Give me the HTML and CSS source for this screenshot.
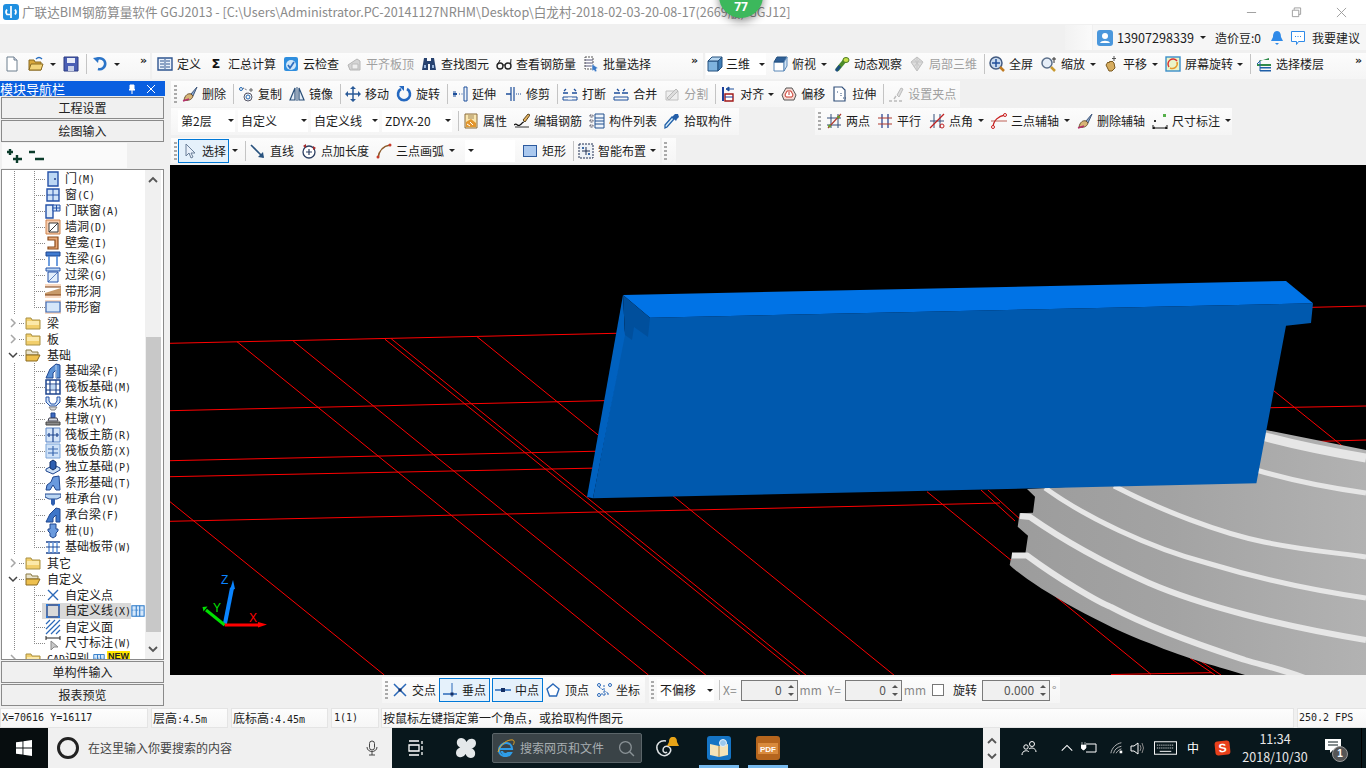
FILE: index.html
```html
<!DOCTYPE html>
<html lang="zh-CN">
<head>
<meta charset="utf-8">
<title>广联达BIM钢筋算量软件 GGJ2013</title>
<link rel="stylesheet" href="styles.css">
</head>
<body>
<svg class="defs" width="0" height="0">
<defs>
<symbol id="new" viewBox="0 0 16 16"><path d="M3 1h7l3 3v11H3z" fill="#fff" stroke="#6d7f8e"/><path d="M10 1v3h3" fill="#dde" stroke="#6d7f8e"/></symbol>
<symbol id="open" viewBox="0 0 16 16"><path d="M1 4h5l1 2h6v8H1z" fill="#d9a83c" stroke="#8a6a20"/><path d="M3 8h12l-2 6H1z" fill="#f3d47a" stroke="#8a6a20"/><path d="M8 3q3-3 6 0" fill="none" stroke="#2a6fc0" stroke-width="1.4"/></symbol>
<symbol id="save" viewBox="0 0 16 16"><path d="M1 1h14v14H1z" fill="#4a5fb5" stroke="#2a3a80"/><path d="M4 2h8v5H4z" fill="#e8ecf8"/><path d="M5 10h6v5H5z" fill="#c8d0e8"/></symbol>
<symbol id="undo" viewBox="0 0 16 16"><path d="M5 3a5.500 5.500 0 1 1 1 10" fill="none" stroke="#2b74c8" stroke-width="2.600"/><path d="M1 2l6-1-1 6z" fill="#2b74c8"/></symbol>
<symbol id="def" viewBox="0 0 16 16"><path d="M1 2h14v12H1z" fill="#eaf1fb" stroke="#2f5590" stroke-width="1.4"/><path d="M3 5h4M3 8h4M3 11h4M9 5h4M9 8h4M9 11h4M8 3v10" stroke="#2f5590"/></symbol>
<symbol id="cloud" viewBox="0 0 16 16"><rect x="1" y="1" width="14" height="14" rx="2" fill="#2f8ede"/><circle cx="8" cy="9" r="5" fill="#cfe7fa"/><path d="M5 9l2 3 4-6" fill="none" stroke="#2f6fc0" stroke-width="1.800"/></symbol>
<symbol id="flat" viewBox="0 0 16 16"><path d="M2 9l9-6 3 2v9H4z" fill="#d5d5d5" stroke="#b5b5b5"/><path d="M6 8h6v5H6z" fill="#eee" stroke="#bbb"/></symbol>
<symbol id="bino" viewBox="0 0 16 16"><path d="M3 2h3v3h4V2h3l2 12h-6V8H7v6H1z" fill="#27426f"/><path d="M3 9h2v3H3zM11 9h2v3h-2z" fill="#9ab6dc"/></symbol>
<symbol id="glasses" viewBox="0 0 16 16"><circle cx="4" cy="10" r="3" fill="none" stroke="#222" stroke-width="1.4"/><circle cx="12" cy="10" r="3" fill="none" stroke="#222" stroke-width="1.4"/><path d="M7 9h2M1.500 9L4 4M14.500 9L15 3" stroke="#222"/></symbol>
<symbol id="batch" viewBox="0 0 16 16"><path d="M2 1h8v12H2z" fill="#fff" stroke="#555" stroke-dasharray="2 1"/><path d="M2 4h8M2 7h8M2 10h8" stroke="#557"/><path d="M9 8l6 4-2 1 1 2-2 1-1-2-2 1z" fill="#3b79c6" stroke="#fff" stroke-width=".5"/></symbol>
<symbol id="cube" viewBox="0 0 16 16"><path d="M1 5h10v10H1z" fill="#7fb3de" stroke="#24507e"/><path d="M1 5l4-4h10l-4 4z" fill="#b7d6ef" stroke="#24507e"/><path d="M11 5l4-4v10l-4 4z" fill="#3f7cb4" stroke="#24507e"/></symbol>
<symbol id="top" viewBox="0 0 16 16"><path d="M2 6h10v9H2z" fill="#fff" stroke="#5a88b8"/><path d="M2 6l3-5h10l-3 5z" fill="#2e5f96" stroke="#24507e"/><path d="M12 6l3-5v9l-3 5z" fill="#d3e4f4" stroke="#5a88b8"/></symbol>
<symbol id="orbit" viewBox="0 0 16 16"><path d="M3 14L12 3" stroke="#4c8c2a" stroke-width="4"/><path d="M2 15L6 10" stroke="#1b4d7e" stroke-width="3"/><ellipse cx="12" cy="4" rx="3" ry="2.500" fill="#c6e04a" stroke="#4c7c20"/></symbol>
<symbol id="local" viewBox="0 0 16 16"><path d="M8 1l6 5-6 9-6-9z" fill="#ddd" stroke="#bdbdbd"/><path d="M2 6h12M8 1v14M5 3l6 8M11 3l-6 8" stroke="#c5c5c5"/></symbol>
<symbol id="fit" viewBox="0 0 16 16"><circle cx="7" cy="7" r="6" fill="#c9daee" stroke="#425a80" stroke-width="1.500"/><path d="M7 3v8M3 7h8" stroke="#23509c" stroke-width="1.500"/><path d="M11 11l4 4" stroke="#c07a20" stroke-width="2.500"/></symbol>
<symbol id="zoom" viewBox="0 0 16 16"><circle cx="6" cy="7" r="5" fill="#e6eef8" stroke="#5b6f8a" stroke-width="1.500"/><path d="M10 11l4 4" stroke="#c99a30" stroke-width="2.500"/><path d="M13 1v6M11 3h4" stroke="#333"/></symbol>
<symbol id="pan" viewBox="0 0 16 16"><path d="M3 9l2-3 1 1 1-2 1 1 1-1 2 2 1 5-3 3H6z" fill="#d6ac5e" stroke="#7b5a20"/><path d="M11 0v5M9 2.500h4" stroke="#555"/></symbol>
<symbol id="rot" viewBox="0 0 16 16"><rect x="1" y="1" width="14" height="14" fill="#eaf4c8" stroke="#3a8ec9" stroke-width="1.400"/><path d="M4 11a5 5 0 0 1 8-6" fill="none" stroke="#d33" stroke-width="1.500"/><path d="M12 6a5 5 0 0 1-7 6" fill="none" stroke="#e69a2a" stroke-width="1.500"/></symbol>
<symbol id="floor" viewBox="0 0 16 16"><path d="M4 5l9-3v2H3zM1 8h14v2H1z" fill="#2f8a4a"/><path d="M4 11h11v1.500H4zM4 14h11v1.500H4z" fill="#1f5fa8"/><path d="M1 8l3-3v10" fill="none" stroke="#1f5fa8"/></symbol>
<symbol id="brush" viewBox="0 0 16 16"><path d="M9 8l6-7-4 9z" fill="#8aa4c8" stroke="#40587c"/><path d="M2 14c1-5 4-7 7-6l2 2c-1 4-5 5-9 4z" fill="#d8b476" stroke="#6a5230"/><path d="M1 15l6-2" stroke="#b52f6a" stroke-width="1.500"/></symbol>
<symbol id="copy" viewBox="0 0 16 16"><circle cx="3" cy="3" r="1.500" fill="#fff" stroke="#2468b0"/><path d="M5 2l4 2M9 7l-2 1" stroke="#445" stroke-dasharray="1 1"/><circle cx="10" cy="11" r="4" fill="none" stroke="#556"/><circle cx="10" cy="11" r="2" fill="none" stroke="#2468b0"/><circle cx="13" cy="4" r="1.200" fill="#ccc" stroke="#666"/></symbol>
<symbol id="mirror" viewBox="0 0 16 16"><path d="M6 2L1 14h5z" fill="#e5edf6" stroke="#2b4f78" stroke-width="1.200"/><path d="M10 2l5 12h-5z" fill="#e5edf6" stroke="#2b4f78" stroke-width="1.200"/><path d="M8 1v14" stroke="#2b4f78"/></symbol>
<symbol id="move" viewBox="0 0 16 16"><path d="M8 1v14M1 8h14" stroke="#2a5a98" stroke-width="1.500"/><path d="M8 0l3 3H5zM8 16l3-3H5zM0 8l3-3v6zM16 8l-3-3v6z" fill="#2a5a98"/></symbol>
<symbol id="rotate" viewBox="0 0 16 16"><path d="M5 3a6 6 0 1 0 6 0" fill="none" stroke="#2468c0" stroke-width="2.600"/><path d="M3 0h5v5z" fill="#2468c0"/></symbol>
<symbol id="extend" viewBox="0 0 16 16"><path d="M12 1h3v14h-3z" fill="#eef4fb" stroke="#1d4e9a"/><path d="M1 8h4" stroke="#1d4e9a" stroke-width="2"/><path d="M7 8h4" stroke="#1d4e9a" stroke-dasharray="1 1.500"/><path d="M1 6h3M1 10h3" stroke="#1d4e9a"/></symbol>
<symbol id="trim" viewBox="0 0 16 16"><path d="M5 1v14M8 1v14" stroke="#1d4e9a" stroke-width="1.200"/><path d="M0 8h5" stroke="#1d4e9a" stroke-width="1.500"/><path d="M10 8h5" stroke="#1d4e9a" stroke-dasharray="1 1"/></symbol>
<symbol id="brk" viewBox="0 0 16 16"><path d="M1 11h14v3H1z" fill="none" stroke="#1d4e9a"/><path d="M2 5l2-2M14 5l-2-2M1 7h5M10 7h5" stroke="#1d4e9a" stroke-width="1.300"/><path d="M7 11v3M9 11v3" stroke="#fff"/></symbol>
<symbol id="mrg" viewBox="0 0 16 16"><path d="M1 11h14v3H1z" fill="none" stroke="#1d4e9a"/><path d="M4 3l2 2M12 3l-2 2M1 7h6M9 7h6" stroke="#1d4e9a" stroke-width="1.300"/></symbol>
<symbol id="splt" viewBox="0 0 16 16"><path d="M2 14h12V5H2z" fill="#eee" stroke="#c0c0c0"/><path d="M3 12l9-9 2 2-9 9z" fill="#ddd" stroke="#bbb"/></symbol>
<symbol id="align" viewBox="0 0 16 16"><path d="M3 1v14" stroke="#1d3f9a" stroke-width="2"/><path d="M5 8h8v7H5z" fill="#fff" stroke="#a01818" stroke-width="1.400"/><path d="M5 11h8" stroke="#1d3f9a"/><path d="M6 3l3-2v4zM9 3h5" stroke="#1d4e9a" fill="#1d4e9a"/></symbol>
<symbol id="offs" viewBox="0 0 16 16"><path d="M5 2h6l4 7-2 5H3l-2-5z" fill="#f6d8d2" stroke="#555"/><path d="M6 5h4l2 4-1 2H5L4 9z" fill="#fff" stroke="#c8382c"/><path d="M8 6v3" stroke="#c8382c"/></symbol>
<symbol id="strc" viewBox="0 0 16 16"><path d="M2 1h8l3 3v11H2z" fill="#fff" stroke="#32507a" stroke-width="1.200"/><path d="M9 7v3M11 12h3M5 6h2" stroke="#32507a" stroke-dasharray="1 1"/></symbol>
<symbol id="grip2" viewBox="0 0 16 16"><path d="M9 9l4-7 2 1-4 8z" fill="#ddd" stroke="#bbb"/><path d="M1 15h3M6 15h3M11 15h3M6 13l2-3" stroke="#bbb" stroke-width="1.400"/></symbol>
<symbol id="attr" viewBox="0 0 16 16"><path d="M2 1h12v14H2z" fill="#f9e6b0" stroke="#8a6a3a"/><path d="M3 9l5-3 5 4v4H3z" fill="#e2962e"/><path d="M5 3h6M5 5h6" stroke="#a58a5a"/><path d="M4 11l3 2M7 9l3 3" stroke="#fff"/></symbol>
<symbol id="edit" viewBox="0 0 16 16"><path d="M9 7l5-6 2 1-5 7z" fill="#e2b260" stroke="#5a4420"/><path d="M0 12c3-3 3 2 6 0s2-3 4-3" fill="none" stroke="#111" stroke-width="1.200"/><path d="M1 14h14" stroke="#333"/></symbol>
<symbol id="list" viewBox="0 0 16 16"><path d="M1 2h3v2H1zM1 7h3v2H1zM1 12h3v2H1z" fill="none" stroke="#556" stroke-dasharray="1 .5"/><path d="M6 1h9v14H6z" fill="#eef4fb" stroke="#23508e"/><path d="M6 5h9M6 8h9M6 11h9" stroke="#23508e"/></symbol>
<symbol id="pick" viewBox="0 0 16 16"><path d="M1 15l2-1 7-8-2-2-7 8z" fill="#d8ecfa" stroke="#1f5fa8" stroke-width="1.300"/><path d="M8 4l4 4 1-2 2-2-1-3h-3l-2 2z" fill="#245ea8"/></symbol>
<symbol id="two" viewBox="0 0 16 16"><path d="M5 1v14M12 1v14M1 5h14M1 12h14" stroke="#344f7a"/><path d="M2 15L15 1" stroke="#b03a2e" stroke-width="1.200"/><circle cx="3.500" cy="13" r="1.500" fill="#6a9a2a"/><circle cx="12.500" cy="4" r="1.500" fill="#6a9a2a"/></symbol>
<symbol id="para" viewBox="0 0 16 16"><path d="M5 1v14M11 1v14" stroke="#1e3a8a" stroke-width="1.200"/><path d="M1 5h14M1 11h14" stroke="#b03a2e" stroke-width="1.200"/></symbol>
<symbol id="ang" viewBox="0 0 16 16"><path d="M5 1v14M11 1v14M1 8h14" stroke="#344f7a"/><path d="M1 15L15 1" stroke="#c02020" stroke-width="1.300"/><circle cx="13" cy="13" r="2" fill="none" stroke="#c02020"/></symbol>
<symbol id="arc3" viewBox="0 0 16 16"><path d="M2 15C2 7 8 3 14 2" fill="none" stroke="#c82020" stroke-width="1.300"/><path d="M0 8h16" stroke="#b03a2e" stroke-width=".8"/><circle cx="2" cy="14" r="1.500" fill="#fff" stroke="#c82020"/><circle cx="14" cy="2" r="1.500" fill="#fff" stroke="#c82020"/></symbol>
<symbol id="dimn" viewBox="0 0 16 16"><path d="M1 15h14M1 12v5M15 12v5" stroke="#111"/><path d="M3 14l-2 1 2 1M13 14l2 1-2 1" stroke="#111" fill="none"/><rect x="11" y="1" width="3" height="3" fill="#55b04a"/><rect x="2" y="7" width="2" height="2" fill="#333"/></symbol>
<symbol id="cur" viewBox="0 0 16 16"><path d="M4 1v12l3-3 2 5 2-1-2-4h4z" fill="#e8f0fa" stroke="#6a7f98"/></symbol>
<symbol id="lin" viewBox="0 0 16 16"><path d="M1 2l12 12" stroke="#28527e" stroke-width="1.600"/><path d="M14 15l-6-1 5-5z" fill="#28527e"/></symbol>
<symbol id="plen" viewBox="0 0 16 16"><circle cx="8" cy="9" r="6" fill="#fff" stroke="#2c3f62" stroke-width="1.300"/><path d="M8 6v6M5 9h6" stroke="#2c3f62" stroke-width="1.200"/><path d="M2 3l3-2v4zM12 3l3 2-3 2z" fill="#a52a2a"/></symbol>
<symbol id="arc" viewBox="0 0 16 16"><path d="M2 15C3 8 7 3 14 2" fill="none" stroke="#8c5a2a" stroke-width="1.500"/><circle cx="2" cy="14" r="1.500" fill="#c83a2a"/><circle cx="14" cy="2" r="1.500" fill="#c83a2a"/></symbol>
<symbol id="rct" viewBox="0 0 16 16"><rect x="1.500" y="2.500" width="13" height="11" fill="#aac8ee" stroke="#2c5a9e"/></symbol>
<symbol id="smt" viewBox="0 0 16 16"><path d="M1 1h14v14H1z" fill="#eef2f6" stroke="#1f2f50" stroke-dasharray="2 1"/><path d="M8 4v8M4 8h8" stroke="#1f2f50"/><path d="M4 4h2v2H4zM10 10h2v2h-2z" fill="#3a6aa8"/></symbol>
<symbol id="crs" viewBox="0 0 16 16"><path d="M2 2l12 12M14 2L2 14" stroke="#2a68b8" stroke-width="1.500"/><rect x="6.500" y="6.500" width="3" height="3" fill="#132f66"/></symbol>
<symbol id="prp" viewBox="0 0 16 16"><path d="M1 12h14" stroke="#2a68b8" stroke-width="1.500"/><path d="M10 1v14" stroke="#2a68b8"/><rect x="8.500" y="10.500" width="3" height="3" fill="#132f66"/></symbol>
<symbol id="mdp" viewBox="0 0 16 16"><path d="M0 8h6M10 8h6" stroke="#2a68b8" stroke-width="1.500"/><rect x="6" y="6" width="4" height="4" fill="#132f66"/></symbol>
<symbol id="vtx" viewBox="0 0 16 16"><path d="M8 2l6 5-2.500 7h-7L2 7z" fill="#fff" stroke="#2a68b8" stroke-width="1.400"/></symbol>
<symbol id="crd" viewBox="0 0 16 16"><path d="M2 12h12M8 3v12M3 5l10 7" stroke="#2a68b8" stroke-dasharray="2 1"/><circle cx="3" cy="13" r="1.500" fill="#fff" stroke="#2a68b8"/><circle cx="3" cy="3" r="1.500" fill="#fff" stroke="#2a68b8"/><circle cx="14" cy="3" r="1.500" fill="#fff" stroke="#2a68b8"/></symbol>

<symbol id="door" viewBox="0 0 16 16"><path d="M3 1h10v14H3z" fill="#bcd7f4" stroke="#2552a8" stroke-width="1.400"/><circle cx="10" cy="8" r="1" fill="#24408a"/></symbol>
<symbol id="wind" viewBox="0 0 16 16"><path d="M2 2h12v12H2z" fill="#cfe2f8" stroke="#2552a8" stroke-width="1.400"/><path d="M8 2v12M2 8h12" stroke="#2552a8"/></symbol>
<symbol id="dwin" viewBox="0 0 16 16"><path d="M1 2h7v13H1z" fill="#e2eefb" stroke="#2552a8" stroke-width="1.400"/><path d="M8 2h7v6H8z" fill="#cfe2f8" stroke="#2552a8"/><path d="M11.500 2v6M8 5h7" stroke="#2552a8"/></symbol>
<symbol id="hole" viewBox="0 0 16 16"><path d="M1 1h14v14H1z" fill="#f5cdb0" stroke="#d0824a"/><path d="M4 4h9v9H4z" fill="#fff" stroke="#3a3a3a"/><path d="M4 13l9-9" stroke="#3a3a3a"/></symbol>
<symbol id="nich" viewBox="0 0 16 16"><path d="M3 2h10v12H3V12h7V5H3z" fill="#e8a878" stroke="#8a4a1a" stroke-width="1.200"/></symbol>
<symbol id="lnk" viewBox="0 0 16 16"><path d="M1 1h14v4H1z" fill="#3f7ad0" stroke="#1f468f"/><path d="M4 5v10M12 5v10" stroke="#4a86d8" stroke-width="1.600"/></symbol>
<symbol id="lnt" viewBox="0 0 16 16"><path d="M1 1h14v3H1z" fill="#bcd7f4" stroke="#2552a8"/><path d="M3 5h10v10H3z" fill="#e2eefb" stroke="#2552a8"/><path d="M3 15L13 5" stroke="#2552a8" stroke-width=".7"/></symbol>
<symbol id="bh" viewBox="0 0 16 16"><path d="M0 1h16v14H0z" fill="#f8d9c2"/><path d="M0 4h16v8H0z" fill="#fff"/><path d="M0 10l16-5v7H0z" fill="#c89a6a"/><path d="M0 4h16M0 12h16" stroke="#7a3f12" stroke-width="1.200"/></symbol>
<symbol id="bw" viewBox="0 0 16 16"><path d="M0 1h16v14H0z" fill="#f8d9c2"/><path d="M1 3h14v10H1z" fill="#d5e6f9" stroke="#3a6ab8" stroke-width="1.200"/></symbol>
<symbol id="fo" viewBox="0 0 16 16"><path d="M1 3h5l1 2h8v9H1z" fill="#f2cf6c" stroke="#a89044"/><path d="M2 6h12v4H2z" fill="#fbe9aa"/></symbol>
<symbol id="fop" viewBox="0 0 16 16"><path d="M1 3h5l1 2h6v3H1z" fill="#e8e2cc" stroke="#8a7a44"/><path d="M1 14V8h14l-3 6z" fill="#eec04e" stroke="#8a6a20"/></symbol>
<symbol id="chr" viewBox="0 0 10 10"><path d="M3 1l4 4-4 4" fill="none" stroke="#a6a6a6" stroke-width="1.500"/></symbol>
<symbol id="chd" viewBox="0 0 10 10"><path d="M1 3l4 4 4-4" fill="none" stroke="#444" stroke-width="1.500"/></symbol>
<symbol id="fbm" viewBox="0 0 16 16"><path d="M1 15l4-9 6-5 4 1v13h-4V7l-3 3v5z" fill="#5c92d6" stroke="#1f468f"/><path d="M11 2v13" stroke="#bcd7f4"/></symbol>
<symbol id="raft" viewBox="0 0 16 16"><path d="M1 1h14v14H1z" fill="#fff" stroke="#1f468f" stroke-width="1.500"/><path d="M5 1v14M11 1v14M1 5h14M1 11h14" stroke="#1f468f" stroke-width="1.200"/><path d="M6 6h4v4H6z" fill="#bcd7f4"/></symbol>
<symbol id="sump" viewBox="0 0 16 16"><path d="M1 2h3v4l2 3h4l2-3V2h3v5l-4 4H5L1 7z" fill="#cfe2f8" stroke="#2552a8"/><path d="M4 12h8l-2 3H6z" fill="#d8d8d8" stroke="#888"/></symbol>
<symbol id="pier" viewBox="0 0 16 16"><path d="M6 2h4v5H6z" fill="#3f6ac0" stroke="#1f468f"/><path d="M4 7h8l1 3H3z" fill="#d4d8e0" stroke="#445"/><path d="M1 11h14v3H1z" fill="#8c8c8c" stroke="#444"/></symbol>
<symbol id="rbm" viewBox="0 0 16 16"><path d="M1 1h14v14H1z" fill="#d6e6f9" stroke="#5a86c8"/><path d="M8 1v14M2 8h12M4 6v4M12 6v4" stroke="#1f468f" stroke-width="1.200"/></symbol>
<symbol id="rbn" viewBox="0 0 16 16"><path d="M1 1h14v14H1z" fill="#cfe2f8" stroke="#7aa4d8"/><path d="M8 3v10M3 6h10M3 10h10" stroke="#3a68b0" stroke-width="1.200"/></symbol>
<symbol id="ftg" viewBox="0 0 16 16"><path d="M1 10l8-4 6 3v2l-7 4-7-3z" fill="#cfe2f8" stroke="#1f468f"/><path d="M5 3l3-2 3 2v6l-3 2-3-2z" fill="#2f5fb0" stroke="#132f66"/></symbol>
<symbol id="stf" viewBox="0 0 16 16"><path d="M1 15l1-5 4-3 2-5 6-1 1 14H11L8 10l-3 5z" fill="#6a9ade" stroke="#1f468f"/></symbol>
<symbol id="cap" viewBox="0 0 16 16"><path d="M0 3h16v3l-4 2H4L0 6z" fill="#bcd7f4" stroke="#1f468f"/><path d="M6 8h4v5l-2 2-2-2z" fill="#2f5fb0"/></symbol>
<symbol id="cbm" viewBox="0 0 16 16"><path d="M1 15l4-8 6-6 4 1v13h-4V8l-3 3v4z" fill="#3f76c8" stroke="#1f468f"/></symbol>
<symbol id="pil" viewBox="0 0 16 16"><path d="M5 1h6v5h2v2l-2 2v3l-3 2-3-2v-3L3 8V6h2z" fill="#6a9ade" stroke="#1f468f"/></symbol>
<symbol id="bnd" viewBox="0 0 16 16"><path d="M1 3h14M1 14h14" stroke="#1f468f" stroke-width="1.500"/><path d="M4 3v11M8 3v11M12 3v11" stroke="#6a9ade" stroke-width="1.500"/><path d="M1 8h14" stroke="#1f468f"/></symbol>
<symbol id="upt" viewBox="0 0 16 16"><path d="M3 3l10 10M13 3L3 13" stroke="#2a68b8" stroke-width="1.400"/></symbol>
<symbol id="uln" viewBox="0 0 16 16"><path d="M2 2h12v12H2z" fill="none" stroke="#1f468f" stroke-width="1.400"/><path d="M1 1h2v2H1zM13 1h2v2h-2zM1 13h2v2H1zM13 13h2v2h-2z" fill="#2a78d8"/></symbol>
<symbol id="ufc" viewBox="0 0 16 16"><path d="M1 5l4-4M1 10l9-9M1 15L15 1M6 15l9-9M11 15l4-4" stroke="#2a68b8" stroke-width="1.200"/></symbol>
<symbol id="udm" viewBox="0 0 16 16"><path d="M1 1v4M15 1v4M1 3h14" stroke="#222"/><path d="M6 6v9l3-3 4 0z" fill="#c8c8c8" stroke="#888"/></symbol>
<symbol id="tbl" viewBox="0 0 16 16"><path d="M1 2h14v12H1z" fill="#d6e8fb" stroke="#2a78c8" stroke-width="1.200"/><path d="M6 2v12M10 2v12" stroke="#2a78c8" stroke-width="1.200"/><path d="M1 7h14" stroke="#2a78c8" stroke-dasharray="1 1"/></symbol>
</defs>
</svg>

<div class="badge">77</div>

<header class="title">
  <svg class="appicon" viewBox="0 0 16 16"><rect width="16" height="16" rx="3" fill="#1f8fe0"/><path d="M8 2v12M4 5.500a4 4 0 0 0 0 5h3M12 5.500a4 4 0 0 1 0 5" fill="none" stroke="#fff" stroke-width="1.700"/></svg>
  <span class="title-text">广联达BIM钢筋算量软件 GGJ2013 - [C:\Users\Administrator.PC-20141127NRHM\Desktop\白龙村-2018-02-03-20-08-17(2669版).GGJ12]</span>
  <div class="winctl">
    <svg viewBox="0 0 12 12"><path d="M1 6h10" stroke="#999"/></svg>
    <svg viewBox="0 0 12 12"><path d="M3.500 3V1h7v7H8.500M1.500 3.500h7v7h-7z" fill="none" stroke="#999"/></svg>
    <svg viewBox="0 0 12 12"><path d="M1 1l10 10M11 1L1 11" stroke="#999"/></svg>
  </div>
</header>

<div class="userbar">
  <div class="ub-blank"></div>
  <div class="ub-main">
    <svg class="ic" viewBox="0 0 16 16"><rect width="16" height="16" rx="3" fill="#4a97dc"/><circle cx="8" cy="6" r="3" fill="#fff"/><path d="M3 13c1-3 9-3 10 0z" fill="#fff"/></svg>
    <span class="phone">13907298339</span>
    <i class="cr"></i>
    <span class="ub-b">造价豆:0</span>
    <svg class="ic bell" viewBox="0 0 16 16"><path d="M8 1c3 0 4 3 4 6l2 4H2l2-4c0-3 1-6 4-6z" fill="#2f8ae8"/><path d="M6 13h4l-2 2z" fill="#2f8ae8"/></svg>
    <svg class="ic chat" viewBox="0 0 16 16"><path d="M1.500 1.500h13v10h-6l-2 3v-3h-5z" fill="#fff" stroke="#2f8ae8"/><path d="M5 6.500h1M7.500 6.500h1M10 6.500h1" stroke="#2f8ae8"/></svg>
    <span>我要建议</span>
  </div>
</div>

<div class="row1">
  <div class="grp g1">
    <svg class="ic"><use href="#new"/></svg>
    <svg class="ic"><use href="#open"/></svg><i class="cr cr-n"></i>
    <svg class="ic"><use href="#save"/></svg>
    <i class="sep"></i>
    <svg class="ic"><use href="#undo"/></svg><i class="cr cr-n"></i>
    <b class="more">»</b>
  </div>
  <div class="grp g2">
    <div class="it"><svg class="ic"><use href="#def"/></svg>定义</div>
    <div class="it"><span class="sigma">Σ</span>汇总计算</div>
    <div class="it"><svg class="ic"><use href="#cloud"/></svg>云检查</div>
    <div class="it off"><svg class="ic"><use href="#flat"/></svg>平齐板顶</div>
    <div class="it"><svg class="ic"><use href="#bino"/></svg>查找图元</div>
    <div class="it"><svg class="ic"><use href="#glasses"/></svg>查看钢筋量</div>
    <div class="it"><svg class="ic"><use href="#batch"/></svg>批量选择</div>
    <b class="more">»</b>
  </div>
  <div class="grp g3">
    <div class="it wb"><svg class="ic"><use href="#cube"/></svg>三维<i class="cr cr-w"></i></div>
    <div class="it"><svg class="ic"><use href="#top"/></svg>俯视</div><i class="cr cr-t"></i>
    <div class="it"><svg class="ic"><use href="#orbit"/></svg>动态观察</div>
    <div class="it off"><svg class="ic"><use href="#local"/></svg>局部三维</div>
    <i class="sep"></i>
    <div class="it"><svg class="ic"><use href="#fit"/></svg>全屏</div>
    <div class="it ml1"><svg class="ic"><use href="#zoom"/></svg>缩放</div><i class="cr cr-t"></i>
    <div class="it"><svg class="ic"><use href="#pan"/></svg>平移</div><i class="cr cr-t"></i>
    <div class="it"><svg class="ic"><use href="#rot"/></svg>屏幕旋转</div><i class="cr cr-tt"></i>
    <i class="sep sep-k"></i>
    <div class="it"><svg class="ic"><use href="#floor"/></svg>选择楼层</div>
    <b class="more">»</b>
  </div>
</div>

<main class="body">
  <nav class="nav">
    <div class="nav-h"><span>模块导航栏</span>
      <svg class="pin" viewBox="0 0 10 10"><path d="M3 1h4v4l1 1H2l1-1zM5 6v4" fill="#fff" stroke="#fff"/></svg>
      <svg class="pin" viewBox="0 0 10 10"><path d="M1 1l8 8M9 1L1 9" stroke="#fff"/></svg>
    </div>
    <div class="nav-b">工程设置</div>
    <div class="nav-b">绘图输入</div>
    <div class="nav-t">
      <svg class="ic" viewBox="0 0 16 16"><path d="M3 1v6M0 4h6M10 7v8M6 11h9" stroke="#0c3d2c" stroke-width="2.400"/></svg>
      <svg class="ic" viewBox="0 0 16 16"><path d="M0 4h6M6 11h9" stroke="#0c3d2c" stroke-width="2.400"/></svg>
    </div>
    <div class="tree">
      <div class="rows">
        <div class="r c"><svg class="ic"><use href="#door"/></svg><span>门<i class="la">(M)</i></span></div>
        <div class="r c"><svg class="ic"><use href="#wind"/></svg><span>窗<i class="la">(C)</i></span></div>
        <div class="r c"><svg class="ic"><use href="#dwin"/></svg><span>门联窗<i class="la">(A)</i></span></div>
        <div class="r c"><svg class="ic"><use href="#hole"/></svg><span>墙洞<i class="la">(D)</i></span></div>
        <div class="r c"><svg class="ic"><use href="#nich"/></svg><span>壁龛<i class="la">(I)</i></span></div>
        <div class="r c"><svg class="ic"><use href="#lnk"/></svg><span>连梁<i class="la">(G)</i></span></div>
        <div class="r c"><svg class="ic"><use href="#lnt"/></svg><span>过梁<i class="la">(G)</i></span></div>
        <div class="r c"><svg class="ic"><use href="#bh"/></svg><span>带形洞</span></div>
        <div class="r c e"><svg class="ic"><use href="#bw"/></svg><span>带形窗</span></div>
        <div class="r t"><svg class="tw"><use href="#chr"/></svg><svg class="ic"><use href="#fo"/></svg><span>梁</span></div>
        <div class="r t"><svg class="tw"><use href="#chr"/></svg><svg class="ic"><use href="#fo"/></svg><span>板</span></div>
        <div class="r t"><svg class="tw"><use href="#chd"/></svg><svg class="ic"><use href="#fop"/></svg><span>基础</span></div>
        <div class="r c"><svg class="ic"><use href="#fbm"/></svg><span>基础梁<i class="la">(F)</i></span></div>
        <div class="r c"><svg class="ic"><use href="#raft"/></svg><span>筏板基础<i class="la">(M)</i></span></div>
        <div class="r c"><svg class="ic"><use href="#sump"/></svg><span>集水坑<i class="la">(K)</i></span></div>
        <div class="r c"><svg class="ic"><use href="#pier"/></svg><span>柱墩<i class="la">(Y)</i></span></div>
        <div class="r c"><svg class="ic"><use href="#rbm"/></svg><span>筏板主筋<i class="la">(R)</i></span></div>
        <div class="r c"><svg class="ic"><use href="#rbn"/></svg><span>筏板负筋<i class="la">(X)</i></span></div>
        <div class="r c"><svg class="ic"><use href="#ftg"/></svg><span>独立基础<i class="la">(P)</i></span></div>
        <div class="r c"><svg class="ic"><use href="#stf"/></svg><span>条形基础<i class="la">(T)</i></span></div>
        <div class="r c"><svg class="ic"><use href="#cap"/></svg><span>桩承台<i class="la">(V)</i></span></div>
        <div class="r c"><svg class="ic"><use href="#cbm"/></svg><span>承台梁<i class="la">(F)</i></span></div>
        <div class="r c"><svg class="ic"><use href="#pil"/></svg><span>桩<i class="la">(U)</i></span></div>
        <div class="r c e"><svg class="ic"><use href="#bnd"/></svg><span>基础板带<i class="la">(W)</i></span></div>
        <div class="r t"><svg class="tw"><use href="#chr"/></svg><svg class="ic"><use href="#fo"/></svg><span>其它</span></div>
        <div class="r t"><svg class="tw"><use href="#chd"/></svg><svg class="ic"><use href="#fop"/></svg><span>自定义</span></div>
        <div class="r c"><svg class="ic"><use href="#upt"/></svg><span>自定义点</span></div>
        <div class="r c"><div class="hl"><svg class="ic"><use href="#uln"/></svg><span>自定义线<i class="la">(X)</i></span><svg class="ic tb-i"><use href="#tbl"/></svg></div></div>
        <div class="r c"><svg class="ic"><use href="#ufc"/></svg><span>自定义面</span></div>
        <div class="r c e"><svg class="ic"><use href="#udm"/></svg><span>尺寸标注<i class="la">(W)</i></span></div>
        <div class="r t"><svg class="tw"><use href="#chr"/></svg><svg class="ic"><use href="#fo"/></svg><span><i class="la">CAD</i>识别</span><svg class="ic tb-n"><use href="#tbl"/></svg><b class="new">NEW</b></div>
      </div>
      <div class="sb">
        <svg class="sb-a" viewBox="0 0 10 10"><path d="M1 7l4-4 4 4" fill="none" stroke="#555" stroke-width="1.800"/></svg>
        <div class="sb-th"></div>
        <svg class="sb-a" viewBox="0 0 10 10"><path d="M1 3l4 4 4-4" fill="none" stroke="#555" stroke-width="1.800"/></svg>
      </div>
    </div>
    <div class="nav-b">单构件输入</div>
    <div class="nav-b">报表预览</div>
  </nav>

  <section class="work">
    <div class="rw r2">
      <div class="grp">
        <i class="grip"></i>
        <div class="it"><svg class="ic"><use href="#brush"/></svg>删除</div>
        <i class="sep"></i>
        <div class="it"><svg class="ic"><use href="#copy"/></svg>复制</div>
        <div class="it"><svg class="ic"><use href="#mirror"/></svg>镜像</div>
        <i class="sep"></i>
        <div class="it"><svg class="ic"><use href="#move"/></svg>移动</div>
        <div class="it"><svg class="ic"><use href="#rotate"/></svg>旋转</div>
        <i class="sep"></i>
        <div class="it"><svg class="ic"><use href="#extend"/></svg>延伸</div>
        <div class="it ml2"><svg class="ic"><use href="#trim"/></svg>修剪</div>
        <i class="sep"></i>
        <div class="it"><svg class="ic"><use href="#brk"/></svg>打断</div>
        <div class="it"><svg class="ic"><use href="#mrg"/></svg>合并</div>
        <div class="it off"><svg class="ic"><use href="#splt"/></svg>分割</div>
        <i class="sep"></i>
        <div class="it"><svg class="ic"><use href="#align"/></svg>对齐</div><i class="cr cr-tt"></i>
        <div class="it"><svg class="ic"><use href="#offs"/></svg>偏移</div>
        <div class="it"><svg class="ic"><use href="#strc"/></svg>拉伸</div>
        <i class="sep"></i>
        <div class="it off"><svg class="ic"><use href="#grip2"/></svg>设置夹点</div>
      </div>
    </div>
    <div class="rw r3">
      <div class="grp g31">
        <div class="sel s1">第2层<i class="cr"></i></div>
        <div class="sel s2">自定义<i class="cr"></i></div>
        <div class="sel s3">自定义线<i class="cr"></i></div>
        <div class="sel s2">ZDYX-20<i class="cr"></i></div>
        <i class="sep"></i>
        <div class="it"><svg class="ic"><use href="#attr"/></svg>属性</div>
        <div class="it"><svg class="ic"><use href="#edit"/></svg>编辑钢筋</div>
        <div class="it"><svg class="ic"><use href="#list"/></svg>构件列表</div>
        <div class="it"><svg class="ic"><use href="#pick"/></svg>拾取构件</div>
      </div>
      <div class="grp g32">
        <i class="grip"></i>
        <div class="it"><svg class="ic"><use href="#two"/></svg>两点</div>
        <div class="it"><svg class="ic"><use href="#para"/></svg>平行</div>
        <div class="it ml1"><svg class="ic"><use href="#ang"/></svg>点角</div><i class="cr cr-t"></i>
        <div class="it"><svg class="ic"><use href="#arc3"/></svg>三点辅轴</div><i class="cr cr-t"></i>
        <div class="it"><svg class="ic"><use href="#brush"/></svg>删除辅轴</div>
        <div class="it"><svg class="ic"><use href="#dimn"/></svg>尺寸标注</div><i class="cr cr-t"></i>
      </div>
    </div>
    <div class="rw r4">
      <div class="grp g41">
        <i class="grip"></i>
        <div class="it act a-s"><svg class="ic"><use href="#cur"/></svg>选择</div><i class="cr cr-s"></i>
        <i class="sep"></i>
        <div class="it"><svg class="ic"><use href="#lin"/></svg>直线</div>
        <div class="it"><svg class="ic"><use href="#plen"/></svg>点加长度</div>
        <div class="it"><svg class="ic"><use href="#arc"/></svg>三点画弧</div><i class="cr cr-t"></i>
        <div class="sel s4"><i class="cr"></i></div>
        <div class="it"><svg class="ic"><use href="#rct"/></svg>矩形</div>
        <i class="sep"></i>
        <div class="it"><svg class="ic"><use href="#smt"/></svg>智能布置</div><i class="cr cr-tt"></i>
      </div>
      <div class="grp g42"><i class="grip"></i></div>
    </div>

    <svg class="scene" viewBox="170 165 1196 510" width="1196" height="510">
      <defs>
        <linearGradient id="gy" gradientUnits="userSpaceOnUse" x1="1010" y1="0" x2="1366" y2="0">
          <stop offset="0" stop-color="#9c9c9c"/><stop offset=".45" stop-color="#a3a3a3"/><stop offset="1" stop-color="#b2b2b2"/>
        </linearGradient>
      </defs>
      <rect x="170" y="165" width="1196" height="510" fill="#000"/>
      <g class="red">
        <polyline points="170,343.300 616,333.300 1000,320 1313,307.300 1366,306"/>
        <polyline points="170,410.700 602,400.700 1000,395 1271,407.700 1366,406"/>
        <polyline points="170,460.700 593,451.300 1000,445 1308,441.700 1366,440"/>
        <line x1="170" y1="476.700" x2="600" y2="468"/>
        <polyline points="170,521.300 770,508.300 1000,503"/>
        <line x1="1111" y1="674.500" x2="1212" y2="672.700"/>
        <line x1="170" y1="501.700" x2="384.300" y2="675"/>
        <line x1="237" y1="341.700" x2="648.400" y2="675"/>
        <line x1="293.200" y1="341" x2="705.800" y2="675"/>
        <line x1="385" y1="339.300" x2="806" y2="680"/>
        <line x1="391.200" y1="338.700" x2="812" y2="680"/>
        <line x1="477" y1="336.700" x2="900" y2="680"/>
        <line x1="927" y1="491.700" x2="1151" y2="674.300"/>
        <line x1="981" y1="490" x2="1015" y2="521"/>
        <line x1="988" y1="490" x2="1022" y2="521"/>
        <line x1="1273.700" y1="390.700" x2="1366" y2="465"/>
        <line x1="1190" y1="658" x2="1215" y2="675"/>
        <line x1="1196" y1="658" x2="1221" y2="675"/>
      </g>
      <path fill="url(#gy)" d="M1027 489L1035 496.700 1033 512.700 1019.600 513.300 1017.700 526.700 1028 535.700 1025.400 553.300 1012 553.300 1009.700 565C1030 585 1100 625 1149 643C1190 660 1220 667 1245 675H1366V450L1266 430 1200 480z"/>
      <g class="wbnd">
        <path class="w9" d="M1262 436C1295 445 1330 452 1366 458"/>
        <path d="M1258 470.500C1290 480 1330 488 1366 493"/>
        <path d="M1114 486C1160 510 1220 533 1264 542S1340 553 1366 557"/>
        <path d="M1045 488C1085 517 1150 548 1207 563C1250 576 1310 590 1366 598"/>
        <path class="w6" d="M1020 516L1030 517C1070 545 1120 570 1149 583C1200 605 1280 626 1366 640"/>
        <path class="w6" d="M1012 555.500L1027 555.500C1060 580 1100 603 1111 607C1160 633 1230 655 1245 660C1265 666 1285 670 1310 680"/>
      </g>
      <path fill="#0059ae" d="M650 317.700L1313 303.300 1311 323 1286 325.700 1256.400 483.300 593 498.300 625 330z"/>
      <path fill="#0073e6" d="M623 295L1286 281 1313 303.300 650 317.700z"/>
      <path fill="#0061bf" d="M623 295L587 497 593 498.300 625 335z"/>
      <path fill="#004f9c" d="M623 295L650 317.700 648 337 634 327 632 340 625 335z"/>
      <g class="axis">
        <path class="ax-z" d="M224.700 625L232 588"/><path class="ax-zh" d="M230 590l3-10 2 9z"/>
        <path class="ax-y" d="M224.700 625L206 610"/><path class="ax-yh" d="M202.500 607l5-.5-4 5z"/>
        <path class="ax-x" d="M224.700 625H258"/><path class="ax-xh" d="M258 622l9 2.500-9 3z"/>
        <text class="t-z" x="221" y="584">Z</text><text class="t-y" x="213" y="612">Y</text><text class="t-x" x="249" y="622">X</text>
      </g>
    </svg>

    <div class="rw rb">
      <div class="grp gb1">
        <i class="grip"></i>
        <div class="it"><svg class="ic"><use href="#crs"/></svg>交点</div>
        <div class="it act a-p"><svg class="ic"><use href="#prp"/></svg>垂点</div>
        <div class="it act a-p"><svg class="ic"><use href="#mdp"/></svg>中点</div>
        <div class="it"><svg class="ic"><use href="#vtx"/></svg>顶点</div>
        <div class="it"><svg class="ic"><use href="#crd"/></svg>坐标</div>
      </div>
      <div class="grp gb2">
        <i class="grip"></i>
        <div class="sel s5">不偏移<i class="cr"></i></div>
        <i class="sep"></i>
        <span class="gray">X=</span>
        <div class="spin s-a sx">0<span class="sp-b"><i class="cr-u"></i><i class="cr-d"></i></span></div>
        <span class="gray">mm</span>
        <span class="gray gy">Y=</span>
        <div class="spin s-a sy">0<span class="sp-b"><i class="cr-u"></i><i class="cr-d"></i></span></div>
        <span class="gray">mm</span>
        <i class="chk"></i>
        <span>旋转</span>
        <div class="spin s-b">0.000<span class="sp-b"><i class="cr-u"></i><i class="cr-d"></i></span></div>
        <span class="gray">°</span>
      </div>
    </div>
  </section>
</main>

<footer class="status">
  <div class="st st1 mono">X=70616 Y=16117</div>
  <div class="st st2">层高<i class="la">:4.5m</i></div>
  <div class="st st3">底标高<i class="la">:4.45m</i></div>
  <div class="st st4 mono">1(1)</div>
  <div class="st st5">按鼠标左键指定第一个角点，或拾取构件图元</div>
  <div class="st st6 mono">250.2 FPS</div>
</footer>

<div class="taskbar">
  <div class="start"><svg viewBox="0 0 16 16" width="16" height="16"><path d="M0 2.300l6.500-.9v6.200H0zM7.400 1.300L16 0v7.600H7.400zM0 8.400h6.500v6.200L0 13.700zM7.400 8.400H16V16l-8.600-1.200z" fill="#fff"/></svg></div>
  <div class="cortana">
    <i class="ring"></i>
    <span class="ct-text">在这里输入你要搜索的内容</span>
    <svg class="mic" viewBox="0 0 16 16"><rect x="5.500" y="1" width="5" height="9" rx="2.500" fill="none" stroke="#444"/><path d="M3 7c0 6 10 6 10 0M8 12v3M5 15h6" fill="none" stroke="#444"/></svg>
  </div>
  <svg class="tv" viewBox="0 0 16 16"><path d="M1 1h10M1 15h10M1 5h10v6H1zM14 1v3M14 6v4M14 12v3" fill="none" stroke="#fff" stroke-width="1.300"/></svg>
  <svg class="fan" viewBox="0 0 24 24"><path d="M12 12C5 13 2 9 3 5s7-4 9 0 0 5 0 7zM12 12c1 7-3 10-7 9s-4-7 0-9 5 0 7 0zM12 12c7-1 10 3 9 7s-7 4-9 0 0-5 0-7zM12 12c-1-7 3-10 7-9s4 7 0 9-5 0-7 0z" fill="#e4e8ea"/></svg>
  <div class="web">
    <svg class="ie" viewBox="0 0 18 18"><path d="M3 10h12c0-4-3-6-6-6s-7 3-7 7 3 6 6 6 5-1 6-3h-3c-2 2-6 1-6-2" fill="none" stroke="#2f9de8" stroke-width="2.200"/><path d="M1 13C3 5 11 0 16 1c2 1 1 4 0 5" fill="none" stroke="#e8a820" stroke-width="1"/></svg>
    <span>搜索网页和文件</span>
    <svg class="mag" viewBox="0 0 16 16"><circle cx="7" cy="7" r="5.500" fill="none" stroke="#8a9296" stroke-width="1.200"/><path d="M11 11l4 4" stroke="#8a9296" stroke-width="1.400"/></svg>
  </div>
  <div class="swirl">
    <svg viewBox="0 0 28 24" width="28" height="24"><path d="M12 5C6 4 2 8 3 13s6 8 10 6 5-6 2-8-6 0-6 3 3 3 4 2" fill="none" stroke="#dfe3e5" stroke-width="1.500"/><path d="M19 1c3 0 4 2 4 5l2 4H13l2-4c0-3 1-5 4-5z" fill="#e8a417"/></svg>
  </div>
  <div class="tk tk1"><svg viewBox="0 0 24 24" width="24" height="24"><rect width="24" height="24" rx="3" fill="#1574c4"/><path d="M3 8l9 2 9-2v11l-9 2-9-2z" fill="#f4e3b8"/><path d="M12 10v11" stroke="#a8803c"/><circle cx="16" cy="7" r="3.500" fill="#9ac8ee" stroke="#e8f2fb"/></svg></div>
  <div class="tk tk2"><svg viewBox="0 0 24 24" width="24" height="24"><rect width="24" height="24" rx="3" fill="#b5651d"/><rect x="2" y="7" width="20" height="11" fill="#d98a3c"/><text class="pdf" x="12" y="16">PDF</text></svg></div>
  <div class="tray-sc"><svg viewBox="0 0 10 10" width="10" height="10"><path d="M1 7l4-4 4 4" fill="none" stroke="#555" stroke-width="1.800"/></svg><svg viewBox="0 0 10 10" width="10" height="10"><path d="M1 3l4 4 4-4" fill="none" stroke="#555" stroke-width="1.800"/></svg></div>
  <div class="tray">
    <svg class="tr tr-ppl" viewBox="0 0 16 16"><circle cx="5" cy="7" r="2.200" fill="none" stroke="#fff"/><circle cx="11" cy="4" r="2.500" fill="none" stroke="#fff"/><path d="M1 15c0-5 6-5 7-3M8 9c2-2 7-1 7 3" fill="none" stroke="#fff"/></svg>
    <svg class="tr tr-up" viewBox="0 0 16 16"><path d="M2 11l6-6 6 6" fill="none" stroke="#fff" stroke-width="1.200"/></svg>
    <svg class="tr tr-bat" viewBox="0 0 16 16"><path d="M5 4h10v8H5" fill="none" stroke="#fff"/><path d="M1 2v3M4 2v3M0 5h5v3l-2 2H2L0 8z" fill="#fff" stroke="#fff" stroke-width=".6"/></svg>
    <svg class="tr tr-wf" viewBox="0 0 16 16"><path d="M1 14C2 8 7 3 13 2M4 14c1-4 4-7 9-8M7 14c1-2 3-4 6-5" fill="none" stroke="#c8c8c8"/><rect x="11" y="11" width="3" height="3" fill="#fff"/></svg>
    <svg class="tr tr-vol" viewBox="0 0 16 16"><path d="M1 6h3l4-3v11L4 11H1z" fill="none" stroke="#fff"/><path d="M10 5q2 3 0 6M12 3q3 5 0 10" fill="none" stroke="#888"/></svg>
    <svg class="tr tr-kb" viewBox="0 0 24 14"><rect x=".5" y=".5" width="23" height="13" fill="none" stroke="#fff"/><path d="M3 4h18M3 7h18" stroke="#fff" stroke-dasharray="1 1"/><path d="M6 10.500h12" stroke="#fff"/></svg>
    <span class="tr-zh">中</span>
    <div class="sogou"><span>S</span></div>
    <div class="clock"><span>11:34</span><span>2018/10/30</span></div>
    <div class="notif"><svg viewBox="0 0 16 16" width="16" height="16"><path d="M0 1h16v11H8l-3 3v-3H0z" fill="#fff"/><path d="M3 4h10M3 7h10" stroke="#0a1a1f"/></svg><b class="nb">1</b></div>
    <i class="edge"></i>
  </div>
</div>
</body>
</html>
```
FILE: styles.css
```css
*{box-sizing:border-box}
html,body{margin:0;padding:0}
body{width:1366px;height:768px;overflow:hidden;background:#f0f0f0;font:12px/16px "Noto Sans CJK SC","Noto Sans",sans-serif;color:#1c1c1c;position:relative}
i{font-style:normal}
.defs{position:absolute}
.ic{width:16px;height:16px;flex:none;display:block}
.badge{position:absolute;left:719px;top:-26px;width:44px;height:44px;border-radius:50%;background:#3cb85c;color:#fff;font:bold 12px/14px "Noto Sans",sans-serif;box-shadow:0 3px 8px rgba(0,0,0,.45);z-index:5;display:flex;align-items:flex-end;justify-content:center;padding-bottom:4px}

.title{height:24px;background:#fff;display:flex;align-items:center;padding-left:3px;color:#8a8a8a}
.appicon{width:16px;height:16px;flex:none;margin-right:3px}
.title-text{font-size:12.6px;white-space:nowrap}
.winctl{margin-left:auto;display:flex;gap:34px;padding-right:19px}
.winctl svg{width:11px;height:11px;display:block}

.userbar{height:28px;display:flex;justify-content:flex-end;padding-top:1px}
.ub-blank{width:27px;height:25px;background:linear-gradient(90deg,#f2f2f2,#fafafa)}
.ub-main{width:273px;height:25px;margin-left:1px;background:#f6f6f6;display:flex;align-items:center;padding-left:4px;white-space:nowrap}
.phone{margin-left:4px;font-size:12.6px;width:76px}
.ub-main .cr{margin-left:7px}
.ub-b{margin-left:9px}
.bell{margin-left:8px}
.chat{margin-left:5px;margin-right:6px}

.grp{display:flex;align-items:center;gap:7px;background:linear-gradient(#fcfcfc,#f5f5f5);white-space:nowrap;height:100%}
.it{display:flex;align-items:center;gap:4px;flex:none}
.off{color:#a0a0a0}
.sigma{width:16px;text-align:center;font:bold 13px/16px "DejaVu Sans",sans-serif;color:#111}
.sep{width:1px;height:20px;background:#c4c4c4;flex:none;margin-right:-3px}
.sep-k{margin-right:-2px}
.ml1{margin-left:1px}
.ml2{margin-left:3px}
.cr{width:0;height:0;flex:none;border-left:3px solid transparent;border-right:3px solid transparent;border-top:3px solid #222;display:block}
.cr-n{margin-left:-1px}
.cr-t{margin-left:-2px}
.cr-tt{margin-left:-3px}
.more{font:bold 11px/12px "DejaVu Sans",sans-serif;margin-left:auto;align-self:flex-start;margin-top:2px;color:#222}

.row1{height:28px;display:flex;gap:2px;padding:1px 0}
.row1 .grp{padding-bottom:4px}
.g1{width:150px;padding-left:4px}
.g1 .sep{margin-right:-2px;margin-left:0}
.g1 .ic:first-child{margin-right:1px}
.g1 .more{padding-right:3px}
.g2{width:551px;padding-left:5px}
.g2 .more{padding-right:5px}
.g3{flex:1;padding-left:1px}
.g3 .more{padding-right:4px}
.wb{background:#fff;height:100%;padding:0 2px 0 1px;gap:3px;margin-right:-1px;width:60px}
.wb .cr{margin-left:6px}

.body{display:flex;height:625px;margin-top:1px}
.nav{width:165px;flex:none;display:flex;flex-direction:column;gap:1px}
.nav-h{height:15px;background:#0a5fe0;color:#fff;display:flex;align-items:center;font-size:13px;line-height:15px}
.nav-h span{flex:1}
.pin{width:10px;height:10px;margin-right:9px;display:block}
.nav-b{height:22px;border:1px solid #8a8a8a;background:#f0f0f0;margin:0 1px;text-align:center;line-height:20px;flex:none;color:#222}
.nav-t{height:25px;background:#fafafa;margin:0 38px 0 2px;display:flex;align-items:center;gap:6px;padding-left:5px;flex:none}
.tree{height:491px;margin:0 1px;border:1px solid #8a8a8a;background:#fff;display:flex;overflow:hidden;flex:none}
.rows{width:143px;flex:none;overflow:hidden;font-size:12px;padding-top:1px}
.r{height:16px;display:flex;align-items:center;gap:4px;white-space:nowrap;flex:none}
.r span{line-height:16px}
.la{font:10px/16px "DejaVu Sans Mono",monospace}
.c{padding-left:43px;background-repeat:no-repeat;background-image:repeating-linear-gradient(#888 0 1px,transparent 1px 2px),repeating-linear-gradient(#888 0 1px,transparent 1px 2px),repeating-linear-gradient(90deg,#888 0 1px,transparent 1px 2px);background-size:1px 16px,1px 16px,11px 1px;background-position:12px 0,32px 0,32px 8px}
.e{background-size:1px 16px,1px 8px,11px 1px}
.t{padding-left:6px;background-repeat:no-repeat;background-image:repeating-linear-gradient(90deg,#888 0 1px,transparent 1px 2px);background-size:6px 1px;background-position:17px 8px;gap:0}
.t .tw{width:10px;height:10px;flex:none;margin-right:7px}
.t .ic{margin-right:6px}
.t .tb-n{margin:0 0 0 3px;width:14px;height:12px}
.hl{display:flex;align-items:center;gap:4px;background:#d9d9d9;height:16px;margin-left:-3px;padding-left:3px;width:103px}
.tb-i{margin-left:-4px;width:14px;background:#fff}
.new{font:bold 9px/10px "Liberation Sans",sans-serif;background:#ffe600;color:#222;padding:0 1px;margin-left:1px;align-self:flex-start}
.sb{width:16px;flex:none;background:#f0f0f0;display:flex;flex-direction:column;align-items:center;justify-content:space-between;padding-top:5px;padding-bottom:5px}
.sb-a{width:10px;height:10px;display:block;flex:none}
.sb-th{width:15px;height:295px;background:#c8c8c8;margin-top:152px;margin-bottom:12px;flex:none}

.work{flex:1;display:flex;flex-direction:column;min-width:0}
.rw{display:flex;margin-left:6px;flex:none}
.r2{height:26px}
.r2 .grp{width:789px;padding-left:3px}
.r3{height:27px;margin-top:1px}
.r3 .grp{padding-bottom:2px}
.r4{height:25px;margin-top:3px;gap:2px}
.grip{width:3px;height:18px;flex:none;margin-right:-2px;background:repeating-linear-gradient(#aaa 0 2px,transparent 2px 4px)}
.sel{display:flex;align-items:center;justify-content:space-between;background:#fff;height:22px;padding:0 1px 0 3px;flex:none}
.g31{width:568px;padding-left:7px;gap:3px}
.g31 .sep{margin:0 0 0 3px}
.g31 .it{margin-left:4px}
.g31 .sep + .it{margin-left:1px}
.s1{width:57px}
.s2{width:70px}
.s3{width:68px}
.g32{margin-left:76px;width:417px;padding-left:3px}
.s4{width:50px;margin-left:3px}
.g41{width:489px;padding-left:3px}
.g42{width:14px;padding-left:2px}
.act{border:1px solid #0078d7;background:#e5f1fb;height:24px}
.a-s{width:51px;padding-left:3px;margin-left:-4px;gap:4px}
.a-s + .cr{margin-left:-4px}
.scene{display:block;margin:2px 0 0 5px;flex:none}
.red polyline,.red line{fill:none;stroke:#f00;stroke-width:1}
.wbnd path{fill:none;stroke:#e6e6e6;stroke-width:5}
.wbnd .w9{stroke-width:9}
.wbnd .w6{stroke-width:6}
.ax-z{stroke:#0a84ff;stroke-width:4;fill:none}
.ax-zh{fill:#0a84ff}
.ax-y{stroke:#00e000;stroke-width:3;fill:none}
.ax-yh{fill:#00e000}
.ax-x{stroke:#f00;stroke-width:3;fill:none}
.ax-xh{fill:#f00}
.t-z,.t-y,.t-x{font:12px "Liberation Sans",sans-serif}
.t-z{fill:#0a84ff}
.t-y{fill:#00e000}
.t-x{fill:#f00}

.rb{height:31px;padding-top:2px;padding-bottom:3px;margin-left:217px}
.gb1{width:263px;padding-left:3px;gap:0}
.gb1 .it{gap:4px;margin-left:4px}
.gb1 .grip{margin-right:1px}
.gb1 .act{height:24px;width:51px;padding-left:2px;margin:0}
.gb1 .act + .it{margin-left:2px}
.gb1 .it:last-child{margin-left:7px}
.gb1 .grip + .it{margin-left:3px}
.gb1 .it:nth-child(2){margin-right:3px}
.gb2{width:411px;margin-left:4px;padding-left:2px;gap:2px}
.gb2 .sep{margin:0 1px 0 3px}
.s5{width:57px;margin-left:3px}
.gray{color:#888}
.gy{margin-left:4px}
.spin{height:21px;border:1px solid #7a7a7a;background:#f0f0f0;display:flex;align-items:center;justify-content:flex-end;flex:none;color:#555;gap:4px;padding-right:1px}
.s-a{width:57px}
.sx{margin-left:2px}
.sy{margin-left:2px}
.s-b{width:68px;margin-left:3px}
.sp-b{width:10px;display:flex;flex-direction:column;gap:5px;align-items:center}
.cr-u,.cr-d{width:0;height:0;border-left:3px solid transparent;border-right:3px solid transparent;display:block}
.cr-u{border-bottom:3px solid #555}
.cr-d{border-top:3px solid #555}
.chk{width:12px;height:12px;border:1px solid #777;background:#fff;margin:0 7px 0 4px;flex:none}

.status{height:22px;display:flex;gap:3px;padding:2px 0 0;background:#f0f0f0}
.st{height:20px;border:1px solid #e4e4e4;background:linear-gradient(#fdfdfd,#f6f6f6);line-height:18px;padding-left:1px;flex:none;white-space:nowrap}
.mono{font:10px/18px "DejaVu Sans Mono",monospace}
.st1{width:148px}
.st2{width:77px}
.st3{width:97px}
.st4{width:48px;padding-left:2px}
.st5{width:913px;margin-left:-1px;padding-left:1px}
.st6{width:70px}

.taskbar{height:40px;background:#08171c;display:flex;align-items:center;position:relative}
.start{width:48px;height:40px;background:#070d0f;display:flex;align-items:center;justify-content:center;flex:none}
.cortana{width:344px;height:40px;background:#f0f0f0;display:flex;align-items:center;padding-left:10px;flex:none}
.ring{width:22px;height:22px;border-radius:50%;border:3px solid #222;flex:none;margin-left:-1px}
.ct-text{margin-left:9px;color:#444;width:272px;font-size:12px}
.mic{width:16px;height:16px;flex:none;margin-left:4px}
.tv{width:16px;height:16px;margin-left:16px;flex:none}
.fan{width:24px;height:24px;margin-left:30px;flex:none}
.web{width:150px;height:30px;margin-left:14px;background:#3a4347;border:1px solid #5b6569;border-radius:2px;display:flex;align-items:center;color:#a8aeb1;padding-left:4px;flex:none}
.ie{width:18px;height:18px;flex:none;margin-right:5px}
.mag{width:17px;height:17px;margin-left:14px;flex:none}
.swirl{margin-left:12px;width:28px;flex:none;height:24px}
.tk{width:40px;height:40px;border-bottom:3px solid #76b9ed;display:flex;align-items:center;justify-content:center;flex:none;padding-top:2px}
.tk1{margin-left:17px}
.tk2{margin-left:9px}
.pdf{font:bold 8px "Liberation Sans",sans-serif;fill:#fff;text-anchor:middle}
.tray-sc{width:17px;height:40px;background:#f0f0f0;margin-left:195px;display:flex;flex-direction:column;align-items:center;justify-content:space-around;padding:5px 0;flex:none}
.tray{flex:1;display:flex;align-items:center;color:#fff;height:40px}
.tr{flex:none;display:block}
.tr-ppl{width:16px;height:16px;margin-left:21px}
.tr-up{width:14px;height:14px;margin-left:23px}
.tr-bat{width:16px;height:16px;margin-left:7px}
.tr-wf{width:14px;height:14px;margin-left:13px}
.tr-vol{width:16px;height:16px;margin-left:6px}
.tr-kb{width:23px;height:14px;margin-left:8px}
.tr-zh{font-size:12px;margin-left:10px;width:14px;flex:none}
.sogou{width:15px;height:14px;background:#e8401a;border-radius:3px;margin-left:14px;display:flex;align-items:center;justify-content:center;font:bold 12px/14px "Liberation Sans",sans-serif;flex:none;transform:rotate(-6deg)}
.clock{display:flex;flex-direction:column;align-items:center;width:68px;margin-left:11px;flex:none;font-size:12.5px;line-height:18px;color:#e8e8e8}
.notif{position:relative;margin-left:16px;width:24px;height:24px;flex:none;padding-top:2px}
.nb{position:absolute;left:7px;top:10px;width:16px;height:16px;border-radius:50%;background:#555;border:1px solid #999;color:#fff;font:bold 10px/14px "Liberation Sans",sans-serif;text-align:center}
.edge{margin-left:auto;width:5px;height:40px;border-left:1px solid #000;flex:none}
```
